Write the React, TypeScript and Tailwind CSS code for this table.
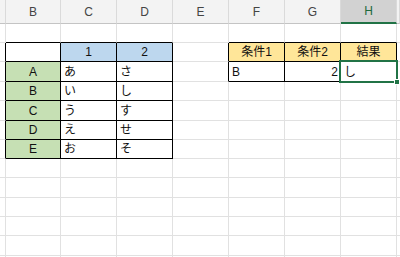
import React from 'react';

const cols = ['A', 'B', 'C', 'D', 'E', 'F', 'G', 'H', 'I'];
const colWidths = ['w-[6px]', 'w-[55px]', 'w-[56px]', 'w-[56px]', 'w-[56px]', 'w-[56px]', 'w-[56px]', 'w-[56px]', 'w-[3px]'];
// row heights include the 1px grid line at the bottom
const rowHeights = [
  'h-[19px]', 'h-[19px]', 'h-[20px]', 'h-[19px]', 'h-[20px]', 'h-[19px]', 'h-[19px]',
  'h-[19px]', 'h-[20px]', 'h-[19px]', 'h-[19px]', 'h-[20px]', 'h-[2px]',
];

type Cell = { v: string; fill?: string; align?: 'center' | 'right' };

const cells: Record<string, Cell> = {
  B2: { v: '' },
  C2: { v: '1', fill: 'bg-[#bdd7ee]', align: 'center' },
  D2: { v: '2', fill: 'bg-[#bdd7ee]', align: 'center' },
  F2: { v: '条件1', fill: 'bg-[#ffe699]', align: 'center' },
  G2: { v: '条件2', fill: 'bg-[#ffe699]', align: 'center' },
  H2: { v: '結果', fill: 'bg-[#ffe699]', align: 'center' },
  B3: { v: 'A', fill: 'bg-[#c6e0b4]', align: 'center' },
  C3: { v: 'あ' },
  D3: { v: 'さ' },
  F3: { v: 'B' },
  G3: { v: '2', align: 'right' },
  H3: { v: 'し' },
  B4: { v: 'B', fill: 'bg-[#c6e0b4]', align: 'center' },
  C4: { v: 'い' },
  D4: { v: 'し' },
  B5: { v: 'C', fill: 'bg-[#c6e0b4]', align: 'center' },
  C5: { v: 'う' },
  D5: { v: 'す' },
  B6: { v: 'D', fill: 'bg-[#c6e0b4]', align: 'center' },
  C6: { v: 'え' },
  D6: { v: 'せ' },
  B7: { v: 'E', fill: 'bg-[#c6e0b4]', align: 'center' },
  C7: { v: 'お' },
  D7: { v: 'そ' },
};

// cells that carry a thin black border on every side
const inTable = (r: number, c: number) =>
  (r >= 2 && r <= 7 && c >= 1 && c <= 3) || (r >= 2 && r <= 3 && c >= 5 && c <= 7);

function ColumnHeader() {
  return (
    <div className="flex h-[24px]">
      {cols.map((name, i) => {
        const selected = name === 'H';
        return (
          <div
            key={name}
            className={
              `${colWidths[i]} flex shrink-0 items-center justify-center overflow-hidden border-r border-r-[#dadada] text-[12px] ` +
              (selected
                ? 'border-b-2 border-b-[#217346] bg-[#d2d2d2] text-[#1e6b3e]'
                : 'border-b border-b-[#c4c4c4] bg-[#f3f3f3] text-[#444]')
            }
          >
            {i > 0 && i < cols.length - 1 ? name : ''}
          </div>
        );
      })}
    </div>
  );
}

function Row({ r, height }: { r: number; height: string }) {
  return (
    <div className={`flex ${height}`}>
      {cols.map((name, c) => {
        const cell = cells[`${name}${r}`];
        const bottom = inTable(r, c) || inTable(r + 1, c) ? 'border-b-black' : 'border-b-[#e1e1e1]';
        const right = inTable(r, c) || inTable(r, c + 1) ? 'border-r-black' : 'border-r-[#e1e1e1]';
        const align =
          cell?.align === 'center' ? 'justify-center' : cell?.align === 'right' ? 'justify-end pr-[2px]' : 'pl-[3px]';
        return (
          <div
            key={name}
            className={`${colWidths[c]} flex shrink-0 items-center overflow-hidden whitespace-nowrap border-b border-r text-[12px] leading-none text-[#111] ${bottom} ${right} ${align} ${cell?.fill ?? 'bg-white'}`}
          >
            {cell?.v}
          </div>
        );
      })}
    </div>
  );
}

export default function App() {
  return (
    <div className="relative h-[257px] w-[400px] overflow-hidden bg-white font-['Liberation_Sans','Noto_Sans_CJK_JP',sans-serif]">
      <ColumnHeader />
      {rowHeights.map((h, i) => (
        <Row key={i} r={i + 1} height={h} />
      ))}

      {/* active cell H3 */}
      <div className="absolute left-[339px] top-[60px] h-[23px] w-[59px] border-2 border-[#217346]" />
      <div className="absolute left-[394px] top-[79px] h-[6px] w-[6px] border border-white bg-[#217346]" />
    </div>
  );
}
